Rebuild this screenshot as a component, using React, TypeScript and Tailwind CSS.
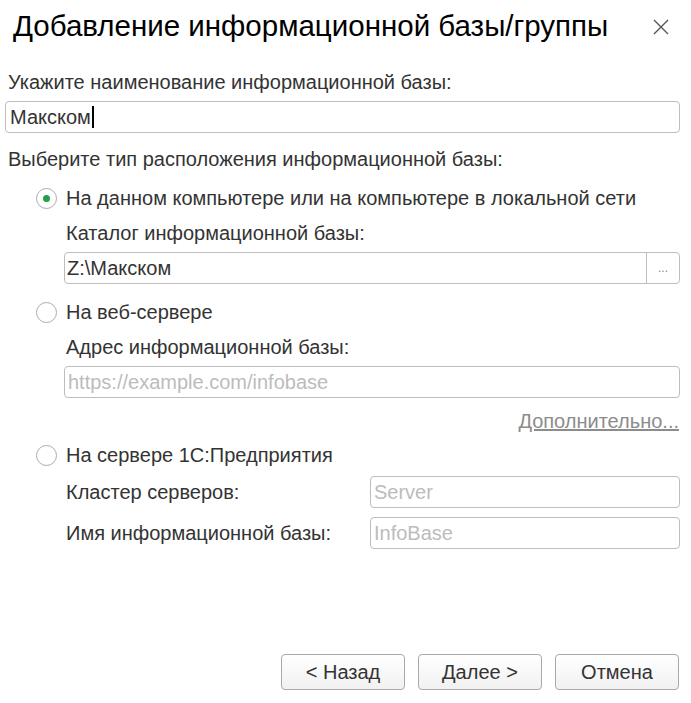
import React from 'react';

const font = { fontFamily: '"Liberation Sans", Arial, sans-serif' };

function Radio({ checked, label }: { checked?: boolean; label: string }) {
  return (
    <div className="flex items-center h-[24px]">
      <span className="w-[21px] h-[21px] rounded-full border border-[#ababab] bg-white flex items-center justify-center ml-[36px] shrink-0">
        {checked && <span className="w-[7px] h-[7px] rounded-full bg-[#21a04a]" />}
      </span>
      <span className="ml-[9px] text-[20px] text-[#333]">{label}</span>
    </div>
  );
}

function Field({ value, placeholder, className = '' }: { value?: string; placeholder?: string; className?: string }) {
  return (
    <div className={`h-[32px] border border-[#bdbdbd] rounded-[4px] bg-white flex items-center px-[3px] text-[20px] ${className}`}>
      {value ? <span className="text-[#333]">{value}</span> : <span className="text-[#bcbcbc]">{placeholder}</span>}
    </div>
  );
}

function Btn({ children }: { children: React.ReactNode }) {
  return (
    <button className="w-[124px] h-[36px] border border-[#a9a9a9] rounded-[4px] bg-gradient-to-b from-white to-[#f1f1f1] text-[20px] text-[#333]">
      {children}
    </button>
  );
}

export default function App() {
  return (
    <div className="w-[691px] h-[703px] bg-white relative flex flex-col" style={font}>
      <div className="flex items-center justify-between pl-[13px] pr-[22px] pt-[7px] h-[44px]">
        <h1 className="text-[29.5px] text-black leading-none">Добавление информационной базы/группы</h1>
        <svg width="16" height="16" viewBox="0 0 16 16" className="mt-[2px]">
          <path d="M1 1L15 15M15 1L1 15" stroke="#555" strokeWidth="1.4" />
        </svg>
      </div>

      <div className="pl-[8px] mt-[27px] text-[20px] text-[#333] leading-[22px]">Укажите наименование информационной базы:</div>
      <div className="ml-[5px] mr-[11px] mt-[8px] h-[32px] border border-[#bdbdbd] rounded-[4px] bg-white flex items-center px-[4px] text-[20px] text-[#333]">
        Макском<span className="w-[2px] h-[22px] bg-black ml-[1px]" />
      </div>

      <div className="pl-[8px] mt-[15px] text-[20px] text-[#333] leading-[22px]">Выберите тип расположения информационной базы:</div>

      <div className="mt-[16px]">
        <Radio checked label="На данном компьютере или на компьютере в локальной сети" />
      </div>
      <div className="pl-[66px] mt-[12px] text-[20px] text-[#333] leading-[22px]">Каталог информационной базы:</div>
      <div className="ml-[64px] mr-[11px] mt-[8px] h-[32px] border border-[#bdbdbd] rounded-[4px] bg-white flex items-stretch text-[20px]">
        <div className="flex-1 flex items-center px-[2px] text-[#333]">Z:\Макском</div>
        <div className="w-[33px] border-l border-[#bdbdbd] flex items-center justify-center text-[12px] text-[#888]">...</div>
      </div>

      <div className="mt-[16px]">
        <Radio label="На веб-сервере" />
      </div>
      <div className="pl-[66px] mt-[12px] text-[20px] text-[#333] leading-[22px]">Адрес информационной базы:</div>
      <Field placeholder="https://example.com/infobase" className="ml-[64px] mr-[11px] mt-[8px]" />
      <div className="flex justify-end mr-[12px] mt-[12px]">
        <span className="text-[20px] text-[#8c8c8c] underline leading-[22px]">Дополнительно...</span>
      </div>

      <div className="mt-[11px]">
        <Radio label="На сервере 1С:Предприятия" />
      </div>
      <div className="flex items-center mt-[9px] ml-[66px] mr-[11px]">
        <span className="w-[304px] text-[20px] text-[#333]">Кластер серверов:</span>
        <Field placeholder="Server" className="flex-1" />
      </div>
      <div className="flex items-center mt-[9px] ml-[66px] mr-[11px]">
        <span className="w-[304px] text-[20px] text-[#333]">Имя информационной базы:</span>
        <Field placeholder="InfoBase" className="flex-1" />
      </div>

      <div className="mt-auto mb-[13px] flex justify-end gap-[13px] pr-[12px]">
        <Btn>&lt; Назад</Btn>
        <Btn>Далее &gt;</Btn>
        <Btn>Отмена</Btn>
      </div>
    </div>
  );
}
